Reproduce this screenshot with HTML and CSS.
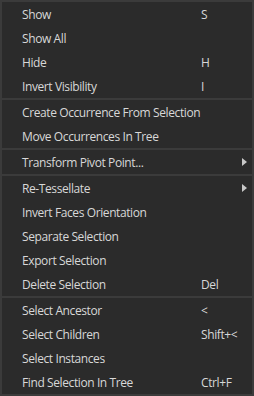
FILE: index.html
```html
<!DOCTYPE html>
<html>
<head>
    <title>Context menu</title>
    <link rel="stylesheet" href="styles.css">
</head>
<body>
    <div class="menu">
        <div class="item"><span class="label">Show</span><span class="key">S</span></div>
        <div class="item"><span class="label">Show All</span><span class="key"></span></div>
        <div class="item"><span class="label">Hide</span><span class="key">H</span></div>
        <div class="item"><span class="label">Invert Visibility</span><span class="key">I</span></div>
        <div class="sep"></div>
        <div class="item"><span class="label">Create Occurrence From Selection</span><span class="key"></span></div>
        <div class="item"><span class="label">Move Occurrences In Tree</span><span class="key"></span></div>
        <div class="sep"></div>
        <div class="item sub"><span class="label">Transform Pivot Point...</span><span class="key"></span><span class="arrow"></span></div>
        <div class="sep"></div>
        <div class="item sub"><span class="label">Re-Tessellate</span><span class="key"></span><span class="arrow"></span></div>
        <div class="item"><span class="label">Invert Faces Orientation</span><span class="key"></span></div>
        <div class="item"><span class="label">Separate Selection</span><span class="key"></span></div>
        <div class="item"><span class="label">Export Selection</span><span class="key"></span></div>
        <div class="item"><span class="label">Delete Selection</span><span class="key">Del</span></div>
        <div class="sep"></div>
        <div class="item"><span class="label">Select Ancestor</span><span class="key">&lt;</span></div>
        <div class="item"><span class="label">Select Children</span><span class="key">Shift+&lt;</span></div>
        <div class="item"><span class="label">Select Instances</span><span class="key"></span></div>
        <div class="item"><span class="label">Find Selection In Tree</span><span class="key">Ctrl+F</span></div>
    </div>
</body>
</html>
```

FILE: styles.css
```css
/* Base */
body {
    margin: 0;
    background: #2b2b2b;
    font-family: "Open Sans", "Noto Sans", sans-serif;
    font-size: 12px;
    letter-spacing: -0.4px;
}

/* Menu frame */
.menu {
    width: 254px;
    height: 396px;
    box-sizing: border-box;
    border: 2px solid #3b3b3b;
    background: #2b2b2b;
    color: #d8d8d8;
}

/* Rows */
.item {
    height: 24px;
    display: grid;
    grid-template-columns: 179px 1fr 10px;
    align-items: center;
    padding-left: 20px;
    white-space: nowrap;
}

.arrow {
    width: 0;
    height: 0;
    border-top: 4.5px solid transparent;
    border-bottom: 4.5px solid transparent;
    border-left: 5px solid #c8c8c8;
}

.sep {
    height: 2px;
    background: #3b3b3b;
}
```
